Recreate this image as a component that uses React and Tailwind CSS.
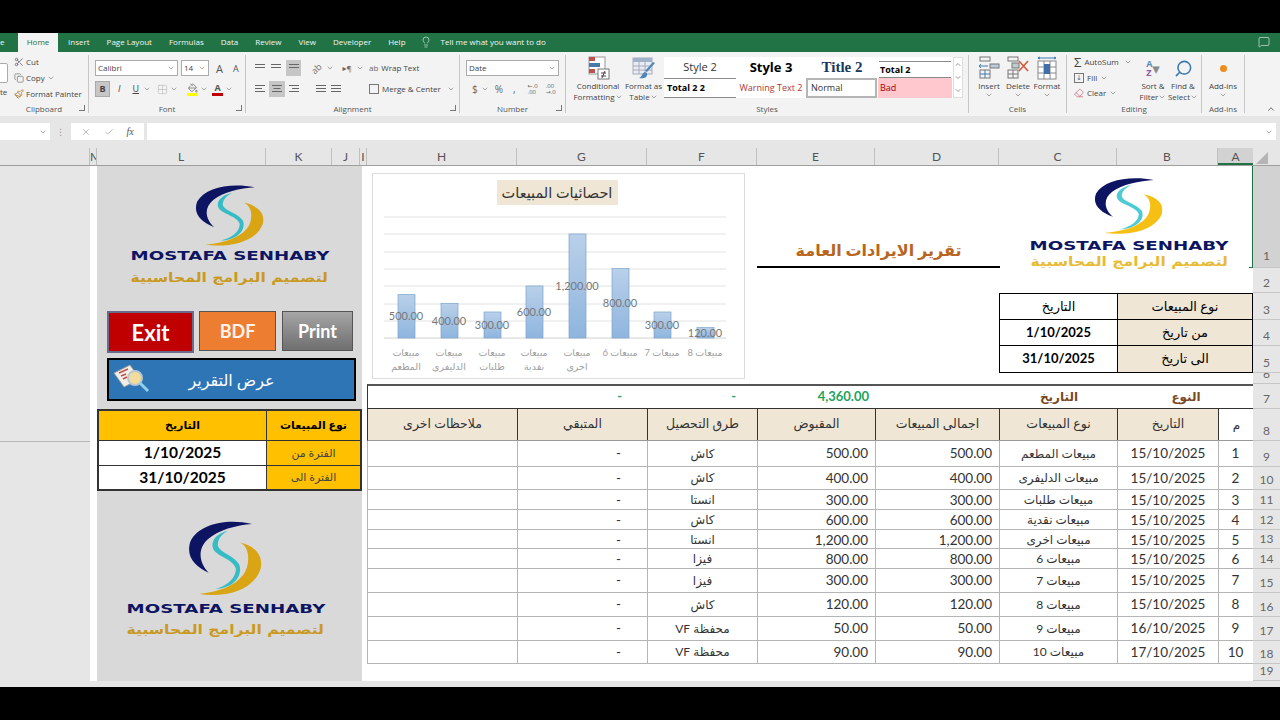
import React from "react";
import { Scissors, Copy, Paintbrush, ChevronDown, ChevronUp, Lightbulb, MessageSquare, X, Check, Search, Eraser, Grid2x2, PaintBucket } from "lucide-react";

const tabs = ["Insert", "Page Layout", "Formulas", "Data", "Review", "View", "Developer", "Help"];

const columns = [
  ["", "w-[90px]"], ["M", "w-[7px]"], ["L", "w-[169px]"], ["K", "w-[66px]"], ["J", "w-[28px]"], ["I", "w-[7px]"],
  ["H", "w-[150px]"], ["G", "w-[130px]"], ["F", "w-[110px]"], ["E", "w-[118px]"], ["D", "w-[124px]"], ["C", "w-[118px]"], ["B", "w-[101px]"],
];

const rowHeads = [
  ["1", "h-[102px] bg-[#d2d2d2] pb-[2px]"], ["2", "h-[25px]"], ["3", "h-[27px]"], ["4", "h-[26px]"], ["5", "h-[27px]"], ["6", "h-[11px]"],
  ["7", "h-[25px]"], ["8", "h-[32px]"], ["9", "h-[26px]"], ["10", "h-[23px]"], ["11", "h-[20px]"], ["12", "h-[20px]"], ["13", "h-[19px]"],
  ["14", "h-[20px]"], ["15", "h-[24px]"], ["16", "h-[24px]"], ["17", "h-[24px]"], ["18", "h-[23px]"], ["19", "h-[17px]"],
];

const sales = [
  ["h-[26px]", "1", "15/10/2025", "مبيعات المطعم", "500.00", "كاش"],
  ["h-[23px]", "2", "15/10/2025", "مبيعات الدليفرى", "400.00", "كاش"],
  ["h-[20px]", "3", "15/10/2025", "مبيعات طلبات", "300.00", "انستا"],
  ["h-[20px]", "4", "15/10/2025", "مبيعات نقدية", "600.00", "كاش"],
  ["h-[19px]", "5", "15/10/2025", "مبيعات اخرى", "1,200.00", "انستا"],
  ["h-[20px]", "6", "15/10/2025", "مبيعات 6", "800.00", "فيزا"],
  ["h-[24px]", "7", "15/10/2025", "مبيعات 7", "300.00", "فيزا"],
  ["h-[24px]", "8", "15/10/2025", "مبيعات 8", "120.00", "كاش"],
  ["h-[24px]", "9", "16/10/2025", "مبيعات 9", "50.00", "محفظة VF"],
  ["h-[23px]", "10", "17/10/2025", "مبيعات 10", "90.00", "محفظة VF"],
];

const bars = [
  [34, 500, "500.00", "مبيعات", "المطعم"],
  [77, 400, "400.00", "مبيعات", "الدليفرى"],
  [120, 300, "300.00", "مبيعات", "طلبات"],
  [162, 600, "600.00", "مبيعات", "نقدية"],
  [205, 1200, "1,200.00", "مبيعات", "اخرى"],
  [248, 800, "800.00", "مبيعات 6", ""],
  [290, 300, "300.00", "مبيعات 7", ""],
  [333, 120, "120.00", "مبيعات 8", ""],
];

const Group = ({ className, label, launcher, children }) => (
  <div className={`${className} relative my-[3px] flex flex-col border-r border-[#c6c6c6]`}>
    <div className="h-[46px] flex-none">{children}</div>
    <div className="mt-[2px] text-center text-[8px] leading-[12px] text-[#555]">{label}</div>
    {launcher && <span className="absolute bottom-[2px] right-[3px] h-[6px] w-[6px] border-b border-r border-[#777]" />}
  </div>
);

const Lines = ({ rows = [10, 10, 10], align = "left" }) => (
  <svg width="12" height="10" viewBox="0 0 12 10" stroke="#666" strokeWidth="1">
    {rows.map((w, i) => {
      const x = align === "left" ? 1 : align === "right" ? 11 - w : 6 - w / 2;
      return <line key={i} x1={x} x2={x + w} y1={1.5 + i * 3} y2={1.5 + i * 3} />;
    })}
  </svg>
);

const Down = () => <ChevronDown size={8} strokeWidth={1.5} className="text-[#555]" />;

const BigBtn = ({ icon, top, bottom, className }) => (
  <div className={`${className} flex flex-col items-center text-[8px] leading-[11px] text-[#444]`}>
    <div className="flex h-[24px] items-center">{icon}</div>
    <span className="whitespace-nowrap">{top}</span>
    <span className="flex items-center whitespace-nowrap">{bottom}<Down /></span>
  </div>
);

const CondIcon = () => (
  <svg width="24" height="24" viewBox="0 0 24 24">
    <rect x="3" y="1" width="16" height="17" fill="#fff" stroke="#999" />
    <rect x="3" y="1" width="6" height="4" fill="#c0504d" />
    <rect x="3" y="7" width="11" height="4" fill="#4a78a8" />
    <rect x="3" y="13" width="6" height="4" fill="#c0504d" />
    <rect x="12" y="13" width="11" height="10" fill="#fff" stroke="#777" />
    <path d="M15 17h5M15 20h5M19 15l-3 7" stroke="#444" fill="none" />
  </svg>
);

const TableIcon = () => (
  <svg width="24" height="24" viewBox="0 0 24 24">
    <rect x="1" y="2" width="19" height="16" fill="#e7edf3" stroke="#aab" />
    <rect x="1" y="2" width="19" height="4" fill="#9fb4c8" />
    <path d="M1 10h19M1 14h19M7 6v12M13 6v12" stroke="#aab" />
    <path d="M23 7L15 16l-2-1 8-9zM13 16c-3 1-3 5-6 6 4 1 9 0 8-5z" fill="#4f86b8" />
  </svg>
);

const InsertIcon = () => (
  <svg width="22" height="24" viewBox="0 0 22 24" stroke="#777" fill="none">
    <rect x="2" y="1" width="10" height="4" /><rect x="2" y="14" width="10" height="8" />
    <path d="M7 14v8M2 18h10M1 10h9M3 8l-2 2 2 2" stroke="#3a7ab0" />
    <rect x="12" y="8" width="9" height="4" fill="#bcd" />
  </svg>
);

const DeleteIcon = () => (
  <svg width="24" height="24" viewBox="0 0 24 24" fill="none" stroke="#777">
    <rect x="2" y="1" width="10" height="4" /><rect x="2" y="14" width="10" height="8" />
    <path d="M7 14v8M2 18h10" />
    <rect x="6" y="7" width="7" height="5" fill="#bcc" />
    <path d="M13 5l9 10M22 5l-9 10" stroke="#d9583b" strokeWidth="1.6" />
  </svg>
);

const FormatIcon = () => (
  <svg width="22" height="24" viewBox="0 0 22 24" fill="none" stroke="#888">
    <rect x="2" y="5" width="18" height="18" fill="#fff" />
    <path d="M8 5v18M14 5v18M2 11h18M2 17h18" />
    <rect x="8" y="8" width="6" height="10" fill="#3f6fa6" stroke="none" />
    <path d="M2 2h18M4 1l-2 1 2 1M18 1l2 1-2 1" stroke="#3a7ab0" />
  </svg>
);

const ReportIcon = () => (
  <svg width="38" height="32" viewBox="0 0 38 32">
    <path d="M2 10L18 2l10 14-16 8z" fill="#f2efe8" stroke="#9a9a9a" />
    <path d="M7 10l9-4M9 13l5-2M11 16l4-2" stroke="#c0504d" strokeWidth="1.4" />
    <circle cx="23" cy="15" r="7" fill="#f3dc9a" stroke="#b7c7d6" strokeWidth="2" />
    <path d="M28 20l8 8" stroke="#8fd0ea" strokeWidth="3" />
  </svg>
);

const LogoMark = ({ className, gold, teal }) => (
  <svg className={className} viewBox="305 55 225 200" preserveAspectRatio="none">
    <path d="M495 65C420 50 340 65 315 110C300 150 330 175 368 190C340 165 335 130 365 105C395 80 450 68 495 65Z" fill="#0d1461" />
    <path d="M425 82C390 90 372 110 382 130C395 150 440 155 448 180C448 205 420 225 388 232C430 232 470 205 458 170C442 145 400 140 395 120C395 100 410 90 425 82Z" fill={teal} />
    <path d="M460 113C490 125 490 170 470 195C445 225 395 240 340 245C420 255 500 235 520 180C530 140 495 120 460 113Z" fill={gold} />
  </svg>
);

const Logo = ({ className, markClass, gap, subGap, gold, teal, subColor }) => (
  <div className={`${className} flex flex-col items-center`}>
    <LogoMark className={markClass} gold={gold} teal={teal} />
    <div className={`${gap} whitespace-nowrap font-['DejaVu_Sans',sans-serif] text-[13px] leading-[14px] font-bold text-[#0d1461] scale-x-[1.4]`}>MOSTAFA SENHABY</div>
    <div dir="rtl" className={`${subGap} ${subColor} whitespace-nowrap font-['DejaVu_Sans',sans-serif] text-[13px] leading-[16px] font-bold scale-x-[1.2]`}>لتصميم البرامج المحاسبية</div>
  </div>
);

const Ribbon = () => (
  <div className="flex h-[64px] bg-[#f3f3f3]">
    <Group className="w-[89px]" label="Clipboard" launcher>
      <div className="relative h-full">
        <div className="absolute left-[-14px] top-[8px] h-[20px] w-[22px] rounded-[2px] border border-[#aaa] bg-white" />
        <div className="absolute left-0 top-[31px] text-[8px] text-[#444]">te</div>
        <div className="ml-[14px] flex flex-col gap-[4px] pt-[1px] text-[8px] leading-[12px] text-[#444]">
          <span className="flex items-center gap-[2px]"><Scissors size={10} className="text-[#667]" />Cut</span>
          <span className="flex items-center gap-[2px]"><Copy size={10} className="text-[#888]" />Copy<Down /></span>
          <span className="flex items-center gap-[2px]"><Paintbrush size={10} className="text-[#a5792f]" />Format Painter</span>
        </div>
      </div>
    </Group>
    <Group className="w-[157px]" label="Font" launcher>
      <div className="flex flex-col gap-[5px] pl-[6px] pt-[5px]">
        <div className="flex items-center gap-[3px]">
          <div className="flex h-[16px] w-[83px] items-center justify-between border border-[#ababab] bg-white px-[2px] text-[8px] text-[#444]">Calibri<Down /></div>
          <div className="flex h-[16px] w-[28px] items-center justify-between border border-[#ababab] bg-white px-[2px] text-[8px] text-[#444]">14<Down /></div>
          <span className="ml-[4px] text-[11px] leading-none text-[#555]">A</span>
          <span className="ml-[7px] text-[9px] leading-none text-[#555]">A</span>
        </div>
        <div className="flex items-center text-[9px] text-[#444]">
          <span className="flex h-[16px] w-[15px] items-center justify-center border border-[#aaa] bg-[#c6c6c6] font-bold">B</span>
          <span className="ml-[8px] italic">I</span>
          <span className="ml-[12px] underline">U</span>
          <span className="ml-[4px]"><Down /></span>
          <Grid2x2 size={11} strokeWidth={1} className="ml-[6px] text-[#aaa]" />
          <span className="ml-[2px]"><Down /></span>
          <span className="ml-[9px] flex flex-col items-center"><PaintBucket size={10} className="text-[#777]" /><span className="h-[3px] w-[11px] bg-[#ffff00]" /></span>
          <span className="ml-[2px]"><Down /></span>
          <span className="ml-[4px] flex flex-col items-center leading-[10px] font-bold text-[#555]">A<span className="h-[3px] w-[11px] bg-[#c00000]" /></span>
          <span className="ml-[2px]"><Down /></span>
        </div>
      </div>
    </Group>
    <Group className="w-[214px]" label="Alignment" launcher>
      <div className="flex h-full">
        <div className="flex flex-col gap-[5px] pl-[8px] pt-[5px]">
          <div className="flex h-[16px] items-center gap-[4px]">
            <Lines rows={[10, 10]} align="center" />
            <Lines rows={[10, 10]} align="center" />
            <span className="flex h-[16px] w-[15px] items-center justify-center bg-[#c6c6c6]"><Lines rows={[10, 10]} align="center" /></span>
            <span className="ml-[6px] -rotate-45 text-[9px] leading-[9px] text-[#777]">ab</span>
            <Down />
            <span className="ml-[5px] text-[8px] text-[#666]">▸¶</span>
            <Down />
          </div>
          <div className="flex h-[16px] items-center gap-[3px]">
            <Lines rows={[10, 7, 10]} />
            <span className="flex h-[16px] w-[16px] items-center justify-center bg-[#c6c6c6]"><Lines rows={[10, 7, 10]} align="center" /></span>
            <Lines rows={[10, 7, 10]} align="right" />
            <span className="ml-[12px]"><Lines /></span>
            <Lines />
          </div>
        </div>
        <div className="ml-auto flex w-[90px] flex-col gap-[5px] whitespace-nowrap pt-[5px] text-[8px] text-[#444]">
          <span className="flex h-[16px] items-center gap-[3px]"><span className="text-[8px] leading-[8px] text-[#666]">ab</span>Wrap Text</span>
          <span className="flex h-[16px] items-center gap-[3px]"><span className="h-[10px] w-[10px] border border-[#777]" />Merge &amp; Center<span className="ml-[3px]"><Down /></span></span>
        </div>
      </div>
    </Group>
    <Group className="w-[106px]" label="Number" launcher>
      <div className="flex flex-col gap-[5px] px-[6px] pt-[5px]">
        <div className="flex h-[16px] items-center justify-between border border-[#ababab] bg-white px-[2px] text-[8px] text-[#444]">Date<Down /></div>
        <div className="flex h-[16px] items-center pl-[6px] text-[10px] text-[#666]">
          <span>$</span><span className="ml-[3px]"><Down /></span>
          <span className="ml-[6px]">%</span>
          <span className="ml-[10px]">,</span>
          <span className="ml-[12px] text-[6px] leading-[6px]">←.0<br />.00</span>
          <span className="ml-[8px] text-[6px] leading-[6px]">.00<br />→.0</span>
        </div>
      </div>
    </Group>
    <Group className="w-[403px]" label="Styles">
      <div className="flex pl-[8px] pt-[1px]">
        <BigBtn className="w-[48px]" icon={<CondIcon />} top="Conditional" bottom="Formatting" />
        <BigBtn className="ml-[3px] w-[37px]" icon={<TableIcon />} top="Format as" bottom="Table" />
        <div className="ml-[2px] mt-[1px] flex h-[41px] w-[289px] bg-white">
          <div className="grid flex-1 grid-cols-[72px_70px_72px_74px] grid-rows-[21px_20px] text-[9px] text-[#333]">
            <div className="flex items-center justify-center text-[11px]">Style 2</div>
            <div className="flex items-center justify-center text-[13px] font-bold text-black">Style 3</div>
            <div className="flex items-center justify-center font-['Liberation_Serif',serif] text-[15px] leading-[15px] font-bold text-[#17375e]">Title 2</div>
            <div className="mx-[1px] mt-[4px] flex items-center border-y border-[#8a8a8a] pl-[1px] font-bold text-black">Total 2</div>
            <div className="flex items-center border-y border-[#8a8a8a] pl-[3px] font-bold text-black">Total 2 2</div>
            <div className="flex items-center justify-center text-[#b0363c]">Warning Text 2</div>
            <div className="mr-[1px] flex items-center border-2 border-[#b5b5b5] pl-[3px]">Normal</div>
            <div className="flex items-center bg-[#ffc7ce] pl-[2px] text-[#9c0006]">Bad</div>
          </div>
        </div>
        <div className="mt-[1px] flex h-[41px] w-[10px] flex-col border border-[#ddd] bg-white text-[#666]">
          <ChevronUp size={8} className="flex-1" />
          <ChevronDown size={8} className="flex-1" />
          <ChevronDown size={8} className="flex-1" />
        </div>
      </div>
    </Group>
    <Group className="w-[98px]" label="Cells">
      <div className="flex pl-[6px] pt-[1px]">
        <BigBtn className="w-[28px]" icon={<InsertIcon />} top="Insert" bottom="" />
        <BigBtn className="w-[30px]" icon={<DeleteIcon />} top="Delete" bottom="" />
        <BigBtn className="w-[28px]" icon={<FormatIcon />} top="Format" bottom="" />
      </div>
    </Group>
    <Group className="w-[135px]" label="Editing">
      <div className="flex pl-[7px] pt-[1px]">
        <div className="flex w-[58px] flex-none flex-col gap-[3.5px] text-[8px] leading-[12px] text-[#444]">
          <span className="flex items-center gap-[3px]"><span className="text-[13px] leading-[12px]">Σ</span>AutoSum<span className="ml-[2px]"><Down /></span></span>
          <span className="flex items-center gap-[3px]"><span className="flex h-[10px] w-[10px] items-center justify-center border border-[#777] text-[7px] text-[#2f6ea5]">↓</span>Fill<Down /></span>
          <span className="flex items-center gap-[3px]"><Eraser size={10} className="text-[#d9748a]" />Clear<Down /></span>
        </div>
        <BigBtn className="ml-[6px] w-[30px]" icon={<span className="flex text-[9px] leading-[9px] font-bold"><span className="flex flex-col text-[#5b8ac0]">A<span className="text-[#8e5aa5]">Z</span></span><span className="text-[15px] leading-[18px] text-[#888]">▾</span></span>} top="Sort &" bottom="Filter" />
        <BigBtn className="w-[30px]" icon={<Search size={19} className="-scale-x-100 text-[#3c7ab0]" />} top="Find &" bottom="Select" />
      </div>
    </Group>
    <Group className="w-[43px]" label="Add-ins">
      <BigBtn className="w-full pt-[1px]" icon={<span className="h-[7px] w-[7px] rounded-full bg-[#f08c1e]" />} top="Add-ins" bottom="" />
    </Group>
    <div className="flex flex-1 items-end justify-end pb-[2px] pr-[4px]"><ChevronUp size={10} className="text-[#555]" /></div>
  </div>
);

const FormulaBar = () => (
  <div className="flex h-[32px] items-start bg-[#e6e6e6] pt-[7px]">
    <div className="flex h-[17px] w-[50px] items-center justify-end bg-white pr-[3px]"><Down /></div>
    <div className="flex w-[21px] justify-center text-[9px] leading-[17px] text-[#999]">⋮</div>
    <div className="flex h-[17px] w-[73px] items-center justify-around bg-white px-[4px] text-[#aaa]">
      <X size={10} />
      <Check size={10} />
      <span className="font-['Liberation_Serif',serif] text-[10px] italic text-[#555]">fx</span>
    </div>
    <div className="ml-[3px] flex h-[17px] w-[1129px] items-center justify-end bg-white pr-[3px]"><Down /></div>
  </div>
);

const ColumnHeaders = () => (
  <div className="flex h-[18px] border-b border-[#9f9f9f] bg-[#e6e6e6] text-[12px] leading-[17px] text-[#555]">
    {columns.map(([name, w], i) => (
      <div key={i} className={`${w} overflow-hidden border-r border-[#c0c0c0] text-center`}>{name}</div>
    ))}
    <div className="w-[35px] border-b-2 border-[#217346] bg-[#d2d2d2] text-center">A</div>
    <div className="flex flex-1 items-end pb-[1px] pl-[3px]"><span className="h-0 w-0 border-b-[12px] border-l-[12px] border-b-[#b5b5b5] border-l-transparent" /></div>
  </div>
);

const Chart = () => (
  <div className="h-[206px] w-[373px] border border-[#dcdcdc]">
    <svg width="371" height="204" viewBox="0 0 371 204" className="font-['Lato','DejaVu_Sans',sans-serif]">
      <defs>
        <linearGradient id="barFill" x1="0" y1="0" x2="0" y2="1">
          <stop offset="0" stopColor="#b9d0ea" />
          <stop offset="1" stopColor="#8fb5de" />
        </linearGradient>
      </defs>
      <rect x="124" y="6" width="121" height="25" fill="#efe6d5" />
      <text x="184" y="24" textAnchor="middle" direction="rtl" fontSize="14.5" fill="#333">احصائيات المبيعات</text>
      {[43, 60, 78, 95, 112, 130, 147].map((y) => (
        <line key={y} x1="11" x2="353" y1={y} y2={y} stroke="#e2e2e2" />
      ))}
      <line x1="11" x2="353" y1="164" y2="164" stroke="#d0d0d0" />
      {bars.map(([cx, value, label, l1, l2]) => {
        const h = value * 0.0867;
        return (
          <g key={cx}>
            <rect x={cx - 9} y={164 - h} width="17" height={h} fill="url(#barFill)" stroke="#7da4cc" strokeWidth="0.7" />
            <text x={cx - 1} y={168 - h / 2} textAnchor="middle" fontSize="11" fill="#777">{label}</text>
            <text x={cx - 1} y={182} textAnchor="middle" direction="rtl" fontSize="9.5" fill="#a0a0a0">{l1}</text>
            {l2 && <text x={cx - 1} y={196} textAnchor="middle" direction="rtl" fontSize="9.5" fill="#a0a0a0">{l2}</text>}
          </g>
        );
      })}
    </svg>
  </div>
);

const LeftPanel = () => (
  <div className="flex h-[515px] w-[265px] flex-col bg-[#d9d9d9]">
    <Logo className="pt-[18px]" markClass="h-[64px] w-[72px]" gap="mt-[1px]" subGap="mt-[7px]" gold="#d9a514" teal="#35bcc4" subColor="text-[#c99a1f]" />
    <div className="mt-[25px] flex items-start pl-[10px]">
      <button className="h-[42px] w-[87px] border-2 border-[#6a6a8a] bg-[#c00000] text-[22px] font-bold text-white">Exit</button>
      <button className="ml-[5px] h-[40px] w-[77px] border border-[#555] bg-[#ed7d31] text-[18px] font-bold text-[#fff3ea]">BDF</button>
      <button className="ml-[6px] h-[40px] w-[71px] border border-[#555] bg-gradient-to-b from-[#a6a6a6] to-[#6f6f6f] text-[18px] font-bold text-white">Print</button>
    </div>
    <div className="relative ml-[10px] mt-[5px] flex h-[43px] w-[249px] items-center justify-center border-2 border-black bg-[#2e75b6] text-[16px] text-white">
      <span className="absolute left-[3px] top-[3px]"><ReportIcon /></span>
      <span dir="rtl">عرض التقرير</span>
    </div>
    <div className="mt-[8px] grid grid-cols-[168px_93px] grid-rows-[30px_25px_23px] border-2 border-[#333] text-center text-black">
      <div className="flex items-center justify-center border-r border-b border-[#333] bg-[#ffc000] text-[11px] font-bold">التاريخ</div>
      <div className="flex items-center justify-center border-b border-[#333] bg-[#ffc000] text-[11px] font-bold">نوع المبيعات</div>
      <div className="flex items-center justify-center border-r border-b border-[#333] bg-white text-[15.5px] font-bold">1/10/2025</div>
      <div className="flex items-center justify-center border-b border-[#333] bg-[#ffc000] text-[11px] text-[#444]">الفترة من</div>
      <div className="flex items-center justify-center border-r border-[#333] bg-white text-[15.5px] font-bold">31/10/2025</div>
      <div className="flex items-center justify-center bg-[#ffc000] text-[11px] text-[#444]">الفترة الى</div>
    </div>
    <Logo className="pr-[8px] pt-[29px]" markClass="h-[78px] w-[77px]" gap="mt-[4px]" subGap="mt-[6px]" gold="#d9a514" teal="#35bcc4" subColor="text-[#c99a1f]" />
  </div>
);

const TopSection = () => (
  <div className="flex h-[218px] pl-[5px] pt-[7px]">
    <Chart />
    <div className="-mt-[7px] ml-[12px] flex flex-1 flex-col">
      <div className="flex h-[102px]">
        <div dir="rtl" className="flex h-full w-[243px] items-end justify-center border-b-2 border-black pb-[3px] text-[16px] leading-[26px] font-bold text-[#b8651f]">تقرير الايرادات العامة</div>
        <div className="relative flex-1 border-r border-[#217346]">
          <Logo className="pl-[6px] pt-[11px]" markClass="h-[59px] w-[72px]" gap="mt-[3px]" subGap="mt-[1px]" gold="#f5bf14" teal="#4ccbd4" subColor="text-[#e8bb35]" />
          <span className="absolute bottom-0 right-0 h-px w-[3px] bg-[#217346]" />
        </div>
      </div>
      <div className="ml-[242px] mt-[25px] grid grid-cols-[118px_134px] grid-rows-[26px_26px_26px] border border-black text-center text-[13px]">
        <div className="flex items-center justify-center border-r border-b border-black">التاريخ</div>
        <div className="flex items-center justify-center border-b border-black bg-[#efe6d5]">نوع المبيعات</div>
        <div className="flex items-center justify-center border-r border-b border-black text-[13px] font-bold">1/10/2025</div>
        <div className="flex items-center justify-center border-b border-black bg-[#efe6d5]">من تاريخ</div>
        <div className="flex items-center justify-center border-r border-black text-[13px] font-bold">31/10/2025</div>
        <div className="flex items-center justify-center bg-[#efe6d5]">الى تاريخ</div>
      </div>
    </div>
  </div>
);

const gridCols = "grid grid-cols-[150px_130px_110px_118px_124px_118px_101px_35px]";
const headCell = "flex items-center justify-center border-r border-[#333] bg-[#efe6d5] text-[12.5px] text-[#333]";
const bodyCell = "flex items-center border-r border-[#b5b5b5]";

const SalesTable = () => (
  <div className="text-[13.5px] text-[#333]">
    <div className={`${gridCols} h-[25px] items-center border-t-2 border-b border-l border-t-[#555] border-b-[#333] border-l-[#333] text-[13px] font-bold`}>
      <div />
      <div className="pr-[26px] text-right text-[#2aa55f]">-</div>
      <div className="pr-[22px] text-right text-[#2aa55f]">-</div>
      <div className="pr-[7px] text-right text-[#22a35a]">4,360.00</div>
      <div />
      <div className="text-center text-[12px] text-[#7a4a1e]">التاريخ</div>
      <div className="col-span-2 text-center text-[12px] text-[#7a4a1e]">النوع</div>
    </div>
    <div className={`${gridCols} h-[32px] border-b border-l border-b-[#999] border-l-[#333]`}>
      <div className={headCell}>ملاحظات اخرى</div>
      <div className={headCell}>المتبقي</div>
      <div className={headCell}>طرق التحصيل</div>
      <div className={headCell}>المقبوض</div>
      <div className={headCell}>اجمالى المبيعات</div>
      <div className={headCell}>نوع المبيعات</div>
      <div className={headCell}>التاريخ</div>
      <div className="flex items-center justify-center text-[12px]">م</div>
    </div>
    {sales.map(([h, no, date, type, amount, method]) => (
      <div key={no} className={`${gridCols} ${h} border-b border-l border-[#b5b5b5]`}>
        <div className={bodyCell} />
        <div className={`${bodyCell} justify-end pr-[26px]`}>-</div>
        <div dir="rtl" className={`${bodyCell} justify-center text-[12px]`}>{method}</div>
        <div className={`${bodyCell} justify-end pr-[7px]`}>{amount}</div>
        <div className={`${bodyCell} justify-end pr-[7px]`}>{amount}</div>
        <div dir="rtl" className={`${bodyCell} justify-center text-[12px]`}>{type}</div>
        <div className={`${bodyCell} justify-center`}>{date}</div>
        <div className="flex items-center justify-center pr-[2px]">{no}</div>
      </div>
    ))}
  </div>
);

const RowHeaders = () => (
  <div className="w-[27px] bg-[#e6e6e6] text-[12px] text-[#666]">
    {rowHeads.map(([n, cls]) => (
      <div key={n} className={`${cls} flex items-end justify-center overflow-hidden border-b border-[#c6c6c6] leading-[18px]`}>{n}</div>
    ))}
  </div>
);

export default function App() {
  return (
    <div className="flex h-[720px] w-[1280px] flex-col overflow-hidden bg-black font-[Lato,'DejaVu_Sans',sans-serif]">
      <div className="h-[33px] flex-none" />
      <div className="flex h-[19px] flex-none items-center bg-[#217346] pb-[1px] font-['Open_Sans','DejaVu_Sans',sans-serif] text-[8px] text-[#f1f6f3]">
        <span className="w-[18px] text-left">e</span>
        <span className="-mb-[1px] flex h-[19px] w-[40px] items-center justify-center bg-[#f3f3f3] pb-[1px] text-[#217346]">Home</span>
        <div className="ml-[10px] flex items-center gap-[17px]">
          {tabs.map((t) => <span key={t}>{t}</span>)}
        </div>
        <Lightbulb size={12} strokeWidth={1.2} className="ml-[14px]" />
        <span className="ml-[9px]">Tell me what you want to do</span>
        <MessageSquare size={12} strokeWidth={1.2} className="ml-auto mr-[10px]" />
      </div>
      <div className="flex-none font-['Open_Sans','DejaVu_Sans',sans-serif]">
        <Ribbon />
        <FormulaBar />
      </div>
      <div className="flex-none"><ColumnHeaders /></div>
      <div className="flex h-[515px] flex-none bg-white">
        <div className="h-full w-[90px] bg-[#e6e6e6]"><div className="h-[276px] border-b border-[#b5b5b5]" /></div>
        <div className="w-[7px]" />
        <LeftPanel />
        <div className="w-[5px]" />
        <div className="w-[886px]">
          <TopSection />
          <SalesTable />
        </div>
        <RowHeaders />
      </div>
      <div className="h-[6px] flex-none bg-[#e6e6e6]" />
    </div>
  );
}
